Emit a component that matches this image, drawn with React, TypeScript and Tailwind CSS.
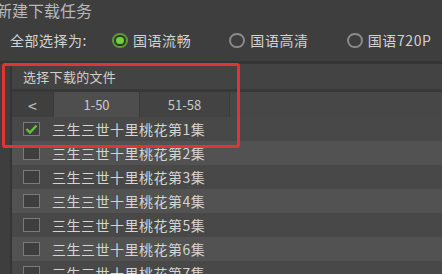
import React from "react";

const episodes = [1, 2, 3, 4, 5, 6, 7];

function Radio({ label, checked }: { label: string; checked?: boolean }) {
  return (
    <div className="flex items-center gap-[5px]">
      <span
        className={
          checked
            ? "flex h-[15px] w-[16px] items-center justify-center rounded-full border-[2px] border-[#5a9a3a] bg-[#2f3a2a]"
            : "flex h-[15px] w-[16px] items-center justify-center rounded-full border-[2px] border-[#8a8a8a]"
        }
      >
        {checked && <span className="h-[7px] w-[8px] rounded-full bg-[#6fd13e]" />}
      </span>
      <span className="text-[14px] tracking-[0.6px] text-[#d2d2d2]">{label}</span>
    </div>
  );
}

function Check({ checked }: { checked?: boolean }) {
  return (
    <span className="flex h-[14px] w-[17px] shrink-0 items-center justify-center border border-[#7a7a7a] bg-[#3e3e3e]">
      {checked && (
        <svg width="13" height="10" viewBox="0 0 13 10">
          <path d="M1.5 5 L5 8.5 L11.5 1.5" fill="none" stroke="#63c43a" strokeWidth="2.4" />
        </svg>
      )}
    </span>
  );
}

export default function App() {
  return (
    <div
      className="relative h-[274px] w-[442px] overflow-hidden bg-[#3e3e3e]"
      style={{ fontFamily: '"Noto Sans CJK SC", "Noto Sans", sans-serif' }}
    >
      {/* title */}
      <div className="flex h-[20px] items-center">
        <span className="ml-[-4px] text-[16px] leading-none text-[#b8b8b8]">新建下载任务</span>
      </div>

      {/* quality row */}
      <div className="flex h-[44px] items-center border-b-[3px] border-[#353535] pl-[10px]">
        <span className="mr-[25px] text-[14px] tracking-[0.5px] text-[#d2d2d2]">全部选择为:</span>
        <div className="flex items-center gap-[38px]">
          <Radio label="国语流畅" checked />
          <Radio label="国语高清" />
          <Radio label="国语720P" />
        </div>
      </div>

      {/* file panel */}
      <div className="ml-[10px] border-l-[2px] border-[#353535]">
        <div className="flex h-[25px] items-center bg-[#434343] pl-[11px]">
          <span className="text-[13px] tracking-[0.3px] text-[#cfcfcf]">选择下载的文件</span>
        </div>
        <div className="flex h-[28px] border-t-[3px] border-[#383838] bg-[#474747]">
          <div className="flex w-[41px] items-center justify-center bg-[#3f3f3f] text-[16px] text-[#bdbdbd]">&lt;</div>
          <div className="flex w-[86px] items-center justify-center border-l border-[#3a3a3a] bg-[#4e4e4e] text-[13px] text-[#c8c8c8]">
            1-50
          </div>
          <div className="flex w-[91px] items-center justify-center border-x border-[#3a3a3a] bg-[#434343] text-[13px] text-[#c8c8c8]">
            51-58
          </div>
        </div>
        {episodes.map((n) => (
          <div
            key={n}
            className={
              n % 2 === 1
                ? "flex h-[24px] items-center bg-[#484848] pl-[11px]"
                : "flex h-[24px] items-center bg-[#525252] pl-[11px]"
            }
          >
            <Check checked={n === 1} />
            <span className="ml-[12px] text-[14px] tracking-[0.5px] text-[#d4d4d4]">三生三世十里桃花第{n}集</span>
          </div>
        ))}
      </div>

      {/* red annotation box */}
      <div className="pointer-events-none absolute left-[2px] top-[63px] h-[85px] w-[238px] rounded-[3px] border-[3px] border-[#e23431]" />
    </div>
  );
}
